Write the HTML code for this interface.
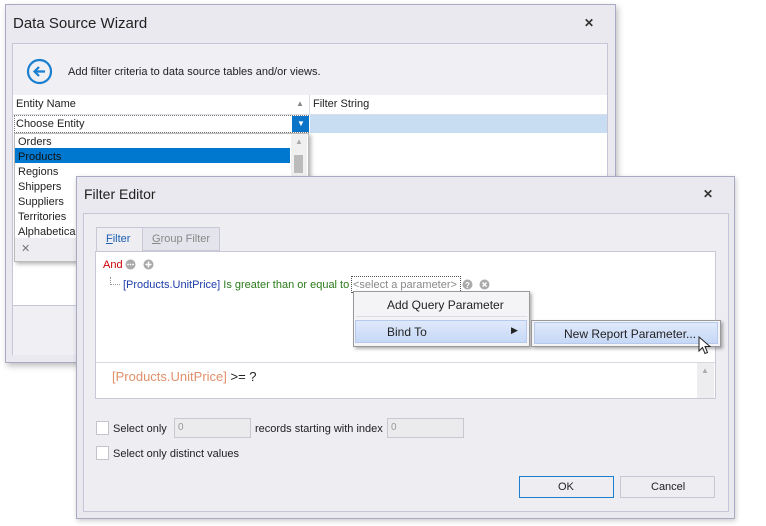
<!DOCTYPE html>
<html><head><style>
*{box-sizing:border-box;margin:0;padding:0}
body{width:766px;height:526px;background:#fff;position:relative;overflow:hidden;font-family:"Liberation Sans",sans-serif;font-size:11px;color:#222}
.a{position:absolute}
.t{position:absolute;white-space:nowrap}
</style></head><body>
<!-- Wizard -->
<div class="a" style="left:5px;top:4px;width:611px;height:359px;background:#e9e9ef;border:1px solid #a9aac4;box-shadow:2px 3px 6px rgba(0,0,0,.25)"></div>
<div class="t" style="left:13px;top:15px;font-size:15px;color:#222">Data Source Wizard</div>
<div class="t" style="left:584px;top:16px;font-size:12px;font-weight:bold;color:#333">✕</div>
<div class="a" style="left:12px;top:43px;width:596px;height:312px;background:#efeff4;border:1px solid #c5c6d8"></div>
<svg class="a" style="left:26px;top:58px" width="27" height="27"><circle cx="13.5" cy="13.5" r="11.5" fill="none" stroke="#1a7fd0" stroke-width="2.2"/><path d="M19 13.5H8.5M13 9l-4.5 4.5L13 18" fill="none" stroke="#1a7fd0" stroke-width="2.2"/></svg>
<div class="t" style="left:68px;top:66px">Add filter criteria to data source tables and/or views.</div>
<div class="a" style="left:13px;top:95px;width:594px;height:210px;background:#fff"></div>
<div class="a" style="left:13px;top:95px;width:594px;height:20px;border-bottom:1px solid #dcdce4"></div>
<div class="a" style="left:309px;top:95px;width:1px;height:20px;background:#dcdce4"></div>
<div class="t" style="left:16px;top:98px">Entity Name</div>
<div class="t" style="left:296px;top:99px;font-size:8px;color:#888">▲</div>
<div class="t" style="left:313px;top:98px">Filter String</div>
<div class="a" style="left:14px;top:115px;width:295px;height:18px;border:1px dotted #777;background:#fff"></div>
<div class="t" style="left:16px;top:118px">Choose Entity</div>
<div class="a" style="left:292px;top:116px;width:17px;height:16px;background:#0a74c8"></div>
<div class="t" style="left:297px;top:119px;font-size:8px;color:#fff">▼</div>
<div class="a" style="left:310px;top:115px;width:297px;height:18px;background:#c9ddf2"></div>
<div class="a" style="left:13px;top:305px;width:594px;height:50px;background:#efeff4;border-top:1px solid #c5c6d8"></div>
<!-- dropdown -->
<div class="a" style="left:14px;top:133px;width:295px;height:129px;background:#fff;border:1px solid #bbb;box-shadow:2px 2px 4px rgba(0,0,0,.3)"></div>
<div class="a" style="left:15px;top:148px;width:275px;height:15px;background:#0078d0"></div>
<div class="t" style="left:18px;top:135px;line-height:15px">Orders<br><span style="color:#111">Products</span><br>Regions<br>Shippers<br>Suppliers<br>Territories<br>Alphabetical</div>
<div class="a" style="left:291px;top:134px;width:16px;height:104px;background:#f0f0f0"></div>
<div class="t" style="left:295px;top:137px;font-size:8px;color:#aaa">▲</div>
<div class="a" style="left:294px;top:155px;width:9px;height:18px;background:#bbb"></div>
<div class="a" style="left:15px;top:238px;width:293px;height:23px;background:#eeeef2"></div>
<div class="t" style="left:21px;top:242px;font-size:11px;color:#777">✕</div>
<!-- Filter editor -->
<div class="a" style="left:76px;top:176px;width:659px;height:343px;background:#e9e9ef;border:1px solid #a9aac4;box-shadow:1px 2px 5px rgba(0,0,0,.2)"></div>
<div class="t" style="left:84px;top:186px;font-size:14px">Filter Editor</div>
<div class="t" style="left:703px;top:187px;font-size:12px;font-weight:bold;color:#333">✕</div>
<div class="a" style="left:83px;top:213px;width:646px;height:299px;background:#ededf2;border:1px solid #c5c6d8"></div>
<div class="a" style="left:96px;top:227px;width:47px;height:25px;background:#ededf2;border:1px solid #c8c8d6;border-bottom:none"></div>
<div class="a" style="left:143px;top:227px;width:77px;height:24px;background:#e4e4ec;border:1px solid #c8c8d6;border-left:none"></div>
<div class="t" style="left:106px;top:233px;color:#1a5fb0"><u>F</u>ilter</div>
<div class="t" style="left:152px;top:233px;color:#888"><u>G</u>roup Filter</div>
<div class="a" style="left:95px;top:251px;width:621px;height:148px;background:#fff;border:1px solid #c8c8d6"></div>
<div class="t" style="left:103px;top:259px;color:#c00">And</div>
<svg class="a" style="left:125px;top:259px" width="32" height="12"><circle cx="5.5" cy="5.5" r="5" fill="#aaa"/><circle cx="3" cy="5.5" r="0.9" fill="#fff"/><circle cx="5.5" cy="5.5" r="0.9" fill="#fff"/><circle cx="8" cy="5.5" r="0.9" fill="#fff"/><circle cx="23.5" cy="5.5" r="5" fill="#aaa"/><path d="M23.5 2.5v6M20.5 5.5h6" stroke="#fff" stroke-width="1.6"/></svg>
<div class="a" style="left:110px;top:277px;width:10px;height:8px;border-left:1px dotted #999;border-bottom:1px dotted #999"></div>
<div class="t" style="left:123px;top:279px;color:#1c3ca8">[Products.UnitPrice] <span style="color:#2a7a1a">Is greater than or equal to</span></div>
<div class="a" style="left:351px;top:276px;width:110px;height:17px;border:1px dotted #555"></div>
<div class="t" style="left:353px;top:279px;color:#888">&lt;select a parameter&gt;</div>
<svg class="a" style="left:462px;top:279px" width="30" height="12"><circle cx="5.5" cy="5.5" r="5" fill="#aaa"/><text x="5.5" y="9" font-size="8" font-weight="bold" text-anchor="middle" fill="#fff" font-family="Liberation Sans">?</text><circle cx="22.5" cy="5.5" r="5" fill="#aaa"/><path d="M20.5 3.5l4 4M24.5 3.5l-4 4" stroke="#fff" stroke-width="1.4"/></svg>
<div class="a" style="left:96px;top:362px;width:619px;height:1px;background:#d8d8e0"></div>
<div class="a" style="left:697px;top:363px;width:17px;height:35px;background:#ededf0"></div>
<div class="t" style="left:701px;top:366px;font-size:8px;color:#aaa">▲</div>
<div class="t" style="left:112px;top:369px;font-size:13px;color:#e0906a">[Products.UnitPrice] <span style="color:#222">&gt;= ?</span></div>
<!-- bottom options -->
<div class="a" style="left:96px;top:421px;width:13px;height:14px;background:#fff;border:1px solid #c4c4cc"></div>
<div class="t" style="left:113px;top:423px">Select only</div>
<div class="a" style="left:174px;top:418px;width:77px;height:20px;background:#ebebee;border:1px solid #c8c8d0"></div>
<div class="t" style="left:178px;top:422px;color:#999;font-size:10px">0</div>
<div class="t" style="left:255px;top:423px">records starting with index</div>
<div class="a" style="left:387px;top:418px;width:77px;height:20px;background:#ebebee;border:1px solid #c8c8d0"></div>
<div class="t" style="left:391px;top:422px;color:#999;font-size:10px">0</div>
<div class="a" style="left:96px;top:446px;width:13px;height:14px;background:#fff;border:1px solid #c4c4cc"></div>
<div class="t" style="left:113px;top:448px">Select only distinct values</div>
<div class="a" style="left:519px;top:476px;width:95px;height:22px;background:#eeeef2;border:1px solid #1a7fd0"></div>
<div class="t" style="left:558px;top:481px">OK</div>
<div class="a" style="left:620px;top:476px;width:95px;height:22px;background:#eeeef2;border:1px solid #c8c8d4"></div>
<div class="t" style="left:651px;top:481px">Cancel</div>
<!-- context menu -->
<div class="a" style="left:353px;top:291px;width:177px;height:56px;background:#f4f4f6;border:1px solid #999;box-shadow:2px 2px 3px rgba(0,0,0,.3)"></div>
<div class="t" style="left:387px;top:298px;font-size:12px">Add Query Parameter</div>
<div class="a" style="left:356px;top:316px;width:171px;height:1px;background:#dcdce4"></div>
<div class="a" style="left:355px;top:320px;width:172px;height:23px;background:linear-gradient(#dfe9fb,#c6d8f6);border:1px solid #b7c9ec"></div>
<div class="t" style="left:387px;top:325px;font-size:12px">Bind To</div>
<div class="t" style="left:511px;top:325px;font-size:9px">▶</div>
<div class="a" style="left:531px;top:320px;width:190px;height:27px;background:#f4f4f6;border:1px solid #999;box-shadow:2px 2px 3px rgba(0,0,0,.3)"></div>
<div class="a" style="left:534px;top:322px;width:184px;height:22px;background:linear-gradient(#dfe9fb,#c6d8f6);border:1px solid #b7c9ec"></div>
<div class="t" style="left:564px;top:327px;font-size:12px">New Report Parameter...</div>
<svg class="a" style="left:698px;top:336px" width="14" height="20"><path d="M1 1V15L4.5 11.5 7 17.5 9.5 16.5 7 10.5H12Z" fill="#fff" stroke="#222" stroke-width="1"/></svg>
</body></html>
